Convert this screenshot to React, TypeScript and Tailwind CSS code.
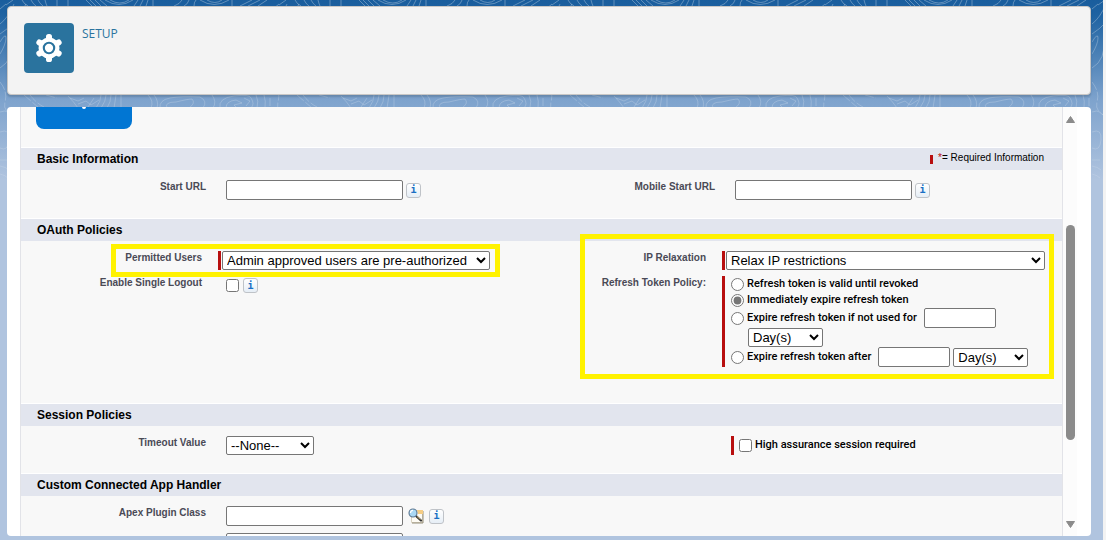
import { useState } from 'react'
import type { ReactNode } from 'react'
import clsx from 'clsx'

const INPUT = 'h-5 rounded-[2px] border border-[#767676] bg-white px-1 text-[13px]'
const SELECT = 'h-[19px] rounded-[2px] border border-[#767676] bg-white text-[13px] leading-none text-black'

const POLICIES = [
  { id: 'valid', label: 'Refresh token is valid until revoked' },
  { id: 'immediate', label: 'Immediately expire refresh token' },
]

function Backdrop() {
  return (
    <svg className="absolute inset-0 -z-10 h-full w-full" aria-hidden="true">
      <defs>
        <pattern id="contours" width="273" height="200" patternUnits="userSpaceOnUse">
          <g fill="none" stroke="#ffffff" strokeOpacity="0.3" strokeWidth="1">
            <path d="M6 5l7-5M0 9l6-5M22 0q2 4 6 6M31 0q2 4 5 6M38 0q2 4 5 6M45 0q1 4 2 6M57 0v6M68 0v6" />
            <path d="M86 0l6 6M90 0l6 6M95 0l6 6M100 0l7 6M105 0q14 9 28 0M110 0q10 6 19 0M134 6l4-6M140 6l3-6M146 6l2-6M153 6V0" />
            <path d="M174 6q6-2 8-6M184 6q4-2 5-6M194 6q0-4 2-6M200 0q14 9 29 0M207 0q8 5 15 0M232 6V0M240 6l12-6M248 6l12-6M258 6l9-6" />
            <path d="M0 24q8-6 14-20M0 34q16-10 26-30M0 54q6-10 6-16t-6 4M0 68q14-8 12-30" />
            <path d="M0 82q8 10 5 20t12 16M0 112q9-4 14 8t-2 26M24 95l15 13M30 95q6 8 14 12M46 95l11 3" strokeDasharray="9 2" />
            <path d="M68 96q6 6 10 12M70 98l8 3 6-3M78 104l8-3 5 4 8-5M94 98l-6 9" />
            <path d="M101 95q0 6-5 13M106 95q0 6-5 13M111 95q0 7-4 13M116 95q-1 7-2 13M121 95v13M148 95q6 6 3 13M154 95q5 6 3 13" />
            <path d="M160 108q-1-8 10-10t30-1q8 4 3 11M167 108q-3-6 9-6 12-3 16-3 4 4-3 9M212 95q5 7 1 13M220 108q-2-10 14-12t17 2q4 6 0 10M226 108q0-7 10-8l6 3-8 2 3 3M244 98l6 3-4 5M256 95q3 6 1 13M264 95q2 6 1 13M270 98v8" />
            <path d="M0 132q10-4 9 8t-9 8M0 160h8M0 166q6 1 9 4M0 174q5 1 8 4" />
          </g>
        </pattern>
        <linearGradient id="fade" x1="0" y1="0" x2="0" y2="1">
          <stop offset="0" stopColor="#fff" />
          <stop offset="1" stopColor="#fff" stopOpacity="0.4" />
        </linearGradient>
        <mask id="fadeMask">
          <rect width="100%" height="190" fill="url(#fade)" />
        </mask>
      </defs>
      <rect width="100%" height="190" fill="url(#contours)" mask="url(#fadeMask)" />
    </svg>
  )
}

function GearIcon() {
  return (
    <svg className="h-7 w-7" viewBox="0 0 28 28" aria-hidden="true">
      <g fill="#fff">
        <circle cx="14" cy="14" r="10.5" />
        <rect x="11" y="0" width="6" height="28" rx="2.6" />
        <rect x="11" y="0" width="6" height="28" rx="2.6" transform="rotate(60 14 14)" />
        <rect x="11" y="0" width="6" height="28" rx="2.6" transform="rotate(120 14 14)" />
      </g>
      <circle cx="14" cy="14" r="5.2" fill="none" stroke="#2a739e" strokeWidth="2.1" />
    </svg>
  )
}

function LookupIcon() {
  return (
    <svg className="h-4 w-4" viewBox="0 0 16 16" aria-hidden="true">
      <path d="M3.500 2.500h11v12h-11z" fill="#fdfbf4" stroke="#d8d2c0" />
      <path d="M15 3v12H4" fill="none" stroke="#948d78" />
      <path d="M9 2h6v4h-5z" fill="#f6cd84" />
      <path d="M8 8l5 4.500" stroke="#333" strokeWidth="2.200" strokeLinecap="round" />
      <path d="M9 8.500l3.500 3" stroke="#e3c27a" strokeWidth="0.800" />
      <circle cx="5" cy="5" r="4" fill="#a9d8f5" stroke="#5b7690" strokeWidth="1.100" />
      <path d="M2.500 5q0-2.500 2.500-2.700" fill="none" stroke="#fff" strokeWidth="1.200" />
    </svg>
  )
}

function InfoButton({ topic }: { topic: string }) {
  return (
    <button
      type="button"
      aria-label={`Help: ${topic}`}
      className="flex h-[15px] w-[15px] shrink-0 items-center justify-center rounded-[3px] border border-[#bfc3c8] bg-linear-to-b from-white to-[#e6eef6] font-['DejaVu_Sans_Mono',monospace] text-[10px] font-bold leading-none text-[#1a6fc4]"
    >
      i
    </button>
  )
}

function Required() {
  return <span className="w-[3px] shrink-0 self-stretch bg-[#b80f0f]" />
}

function Label({ htmlFor, narrow, children }: { htmlFor?: string; narrow?: boolean; children: ReactNode }) {
  return (
    <label
      htmlFor={htmlFor}
      className={clsx('shrink-0 text-right text-[10px] font-bold leading-[14px] text-[#4a4a56]', narrow ? 'w-[181px]' : 'w-[185px]')}
    >
      {children}
    </label>
  )
}

function SectionTitle({ title, children }: { title: string; children?: ReactNode }) {
  return (
    <div className="flex h-[23px] items-center justify-between border-t border-white bg-[#e2e5ee] pl-4 pr-[18px]">
      <h3 className="text-xs font-bold text-black">{title}</h3>
      {children}
    </div>
  )
}

function UnitSelect({ label }: { label: string }) {
  return (
    <select aria-label={label} className={clsx(SELECT, 'w-[75px]')}>
      <option>Day(s)</option>
      <option>Hour(s)</option>
      <option>Month(s)</option>
    </select>
  )
}

export default function App() {
  const [policy, setPolicy] = useState('immediate')

  function radio(id: string) {
    return (
      <input
        type="radio"
        id={id}
        name="refreshPolicy"
        checked={policy === id}
        onChange={() => setPolicy(id)}
        className="h-[13px] w-[13px] shrink-0 accent-[#767676]"
      />
    )
  }

  return (
    <div className="flex h-screen overflow-hidden bg-[#f3f3f3] font-['Liberation_Sans',Arial,sans-serif] text-black">
      <div className="relative isolate mr-[3px] flex min-w-0 flex-1 flex-col gap-3 bg-[#b0c4df] bg-[linear-gradient(#195d9d_0px,#1f63a2_16px,#7ea3cd_100px,#b0c4df_180px)] pb-1 pl-[7px] pr-3 pt-1.5">
        <Backdrop />

        <header className="flex h-[89px] shrink-0 gap-2 rounded border border-[#c9c7c5] bg-[#f3f3f3] px-4 py-4 shadow-[0_2px_2px_rgba(0,0,0,0.15)]">
          <div className="flex h-[50px] w-[50px] items-center justify-center rounded bg-[#2a739e]">
            <GearIcon />
          </div>
          <h1 className="pt-[3px] font-['Open_Sans','Noto_Sans',sans-serif] text-xs text-[#2a739e]">SETUP</h1>
        </header>

        <main className="flex min-h-0 flex-1 overflow-hidden rounded bg-white pl-[13px] pr-3.5">
          <form className="min-w-0 flex-1 overflow-hidden border-x border-[#e2e3e8] bg-[#f8f8f8]">
            <div className="h-10 pl-[15px]">
              <button
                type="button"
                aria-label="Edit policies"
                className="flex h-[22px] w-24 justify-center rounded-b-lg bg-[#0176d3]"
              >
                <span className="h-0.5 w-1 rounded-b-full bg-white" />
              </button>
            </div>

            <SectionTitle title="Basic Information">
              <span className="flex items-center gap-[5px] text-[10px] leading-3">
                <span className="h-[9px] w-[3px] bg-[#b80f0f]" />
                <span className="pb-0.5">
                  <span className="text-[#b80f0f]">*</span>= Required Information
                </span>
              </span>
            </SectionTitle>
            <div className="grid grid-cols-[509fr_532fr] pb-[18px] pt-2.5">
              <div className="flex gap-5">
                <Label htmlFor="startUrl">Start URL</Label>
                <div className="flex items-center gap-[3px]">
                  <input id="startUrl" type="text" className={clsx(INPUT, 'w-[177px]')} />
                  <InfoButton topic="Start URL" />
                </div>
              </div>
              <div className="flex gap-5">
                <Label htmlFor="mobileUrl">Mobile Start URL</Label>
                <div className="flex items-center gap-[3px]">
                  <input id="mobileUrl" type="text" className={clsx(INPUT, 'w-[177px]')} />
                  <InfoButton topic="Mobile Start URL" />
                </div>
              </div>
            </div>

            <SectionTitle title="OAuth Policies" />
            <div className="grid grid-cols-[504fr_537fr] pb-9 pt-2.5">
              <div className="flex flex-col gap-1.5">
                <div className="relative flex gap-4">
                  <Label htmlFor="permitted" narrow>Permitted Users</Label>
                  <div className="flex gap-px">
                    <Required />
                    <select id="permitted" className={clsx(SELECT, 'w-[268px]')}>
                      <option>Admin approved users are pre-authorized</option>
                      <option>All users may self-authorize</option>
                    </select>
                  </div>
                  <div className="pointer-events-none absolute -inset-y-[7px] left-[90px] w-[389px] border-[5px] border-[#fff200]" />
                </div>
                <div className="flex gap-6">
                  <Label htmlFor="logout" narrow>Enable Single Logout</Label>
                  <div className="flex items-center gap-1 pt-0.5">
                    <input id="logout" type="checkbox" className="h-[13px] w-[13px]" />
                    <InfoButton topic="Enable Single Logout" />
                  </div>
                </div>
              </div>

              <div className="relative flex flex-col gap-1.5 pr-[17px]">
                <div className="flex gap-4">
                  <Label htmlFor="relaxation" narrow>IP Relaxation</Label>
                  <div className="flex min-w-0 flex-1 gap-px">
                    <Required />
                    <select id="relaxation" className={clsx(SELECT, 'min-w-0 flex-1')}>
                      <option>Relax IP restrictions</option>
                      <option>Enforce IP restrictions</option>
                    </select>
                  </div>
                </div>
                <div className="flex gap-4">
                  <Label narrow>Refresh Token Policy:</Label>
                  <div className="flex gap-1.5 font-[Roboto,Arial,sans-serif] text-[11px] font-medium">
                    <Required />
                    <div className="flex flex-col">
                      {POLICIES.map((p) => (
                        <div key={p.id} className="flex h-4 items-center gap-[3px]">
                          {radio(p.id)}
                          <label htmlFor={p.id}>{p.label}</label>
                        </div>
                      ))}
                      <div className="flex h-5 items-center gap-[3px]">
                        {radio('unused')}
                        <label htmlFor="unused" className="pr-1">Expire refresh token if not used for</label>
                        <input aria-label="Unused period" type="text" className={clsx(INPUT, 'w-[72px]')} />
                      </div>
                      <div className="flex pl-[17px] font-['Liberation_Sans',Arial,sans-serif]">
                        <UnitSelect label="Unused period unit" />
                      </div>
                      <div className="flex h-5 items-center gap-[3px]">
                        {radio('after')}
                        <label htmlFor="after" className="pr-1">Expire refresh token after</label>
                        <input aria-label="Expiry period" type="text" className={clsx(INPUT, 'w-[72px]')} />
                        <div className="flex font-['Liberation_Sans',Arial,sans-serif]">
                          <UnitSelect label="Expiry period unit" />
                        </div>
                      </div>
                    </div>
                  </div>
                </div>
                <div className="pointer-events-none absolute -bottom-3 -top-[17px] left-[55px] right-2 border-[5px] border-[#fff200]" />
              </div>
            </div>

            <SectionTitle title="Session Policies" />
            <div className="grid grid-cols-[509fr_532fr] pb-[18px] pt-2.5">
              <div className="flex gap-5">
                <Label htmlFor="timeout">Timeout Value</Label>
                <select id="timeout" className={clsx(SELECT, 'w-[88px]')}>
                  <option>--None--</option>
                  <option>15 minutes</option>
                  <option>1 hour</option>
                </select>
              </div>
              <div className="flex gap-[5px] pl-[201px] font-[Roboto,Arial,sans-serif] text-[11px] font-medium">
                <Required />
                <div className="flex items-center gap-[3px]">
                  <input id="assurance" type="checkbox" className="h-[13px] w-[13px]" />
                  <label htmlFor="assurance">High assurance session required</label>
                </div>
              </div>
            </div>

            <SectionTitle title="Custom Connected App Handler" />
            <div className="flex flex-col gap-[7px] pt-2.5">
              <div className="flex gap-5">
                <Label htmlFor="plugin">Apex Plugin Class</Label>
                <div className="flex items-center gap-[5px]">
                  <input id="plugin" type="text" className={clsx(INPUT, 'w-[177px]')} />
                  <button type="button" aria-label="Apex Plugin Class lookup">
                    <LookupIcon />
                  </button>
                  <InfoButton topic="Apex Plugin Class" />
                </div>
              </div>
              <div className="flex pl-[205px]">
                <input aria-label="Run as" type="text" className={clsx(INPUT, 'w-[177px]')} />
              </div>
            </div>
          </form>

          <div className="flex w-3.5 flex-col items-center bg-[#fcfcfc] pb-2 pt-[9px]" aria-hidden="true">
            <svg className="h-[7px] w-[9px]" viewBox="0 0 9 7">
              <path d="M4.500 0.500L8.500 6.500H0.500z" fill="#8b8b8b" stroke="#8b8b8b" strokeLinejoin="round" />
            </svg>
            <span className="flex-[102]" />
            <span className="w-[9px] flex-[215] rounded-full bg-[#8b8b8b]" />
            <span className="flex-[81]" />
            <svg className="h-[7px] w-[9px]" viewBox="0 0 9 7">
              <path d="M4.500 6.500L8.500 0.500H0.500z" fill="#8b8b8b" stroke="#8b8b8b" strokeLinejoin="round" />
            </svg>
          </div>
        </main>
      </div>
    </div>
  )
}
